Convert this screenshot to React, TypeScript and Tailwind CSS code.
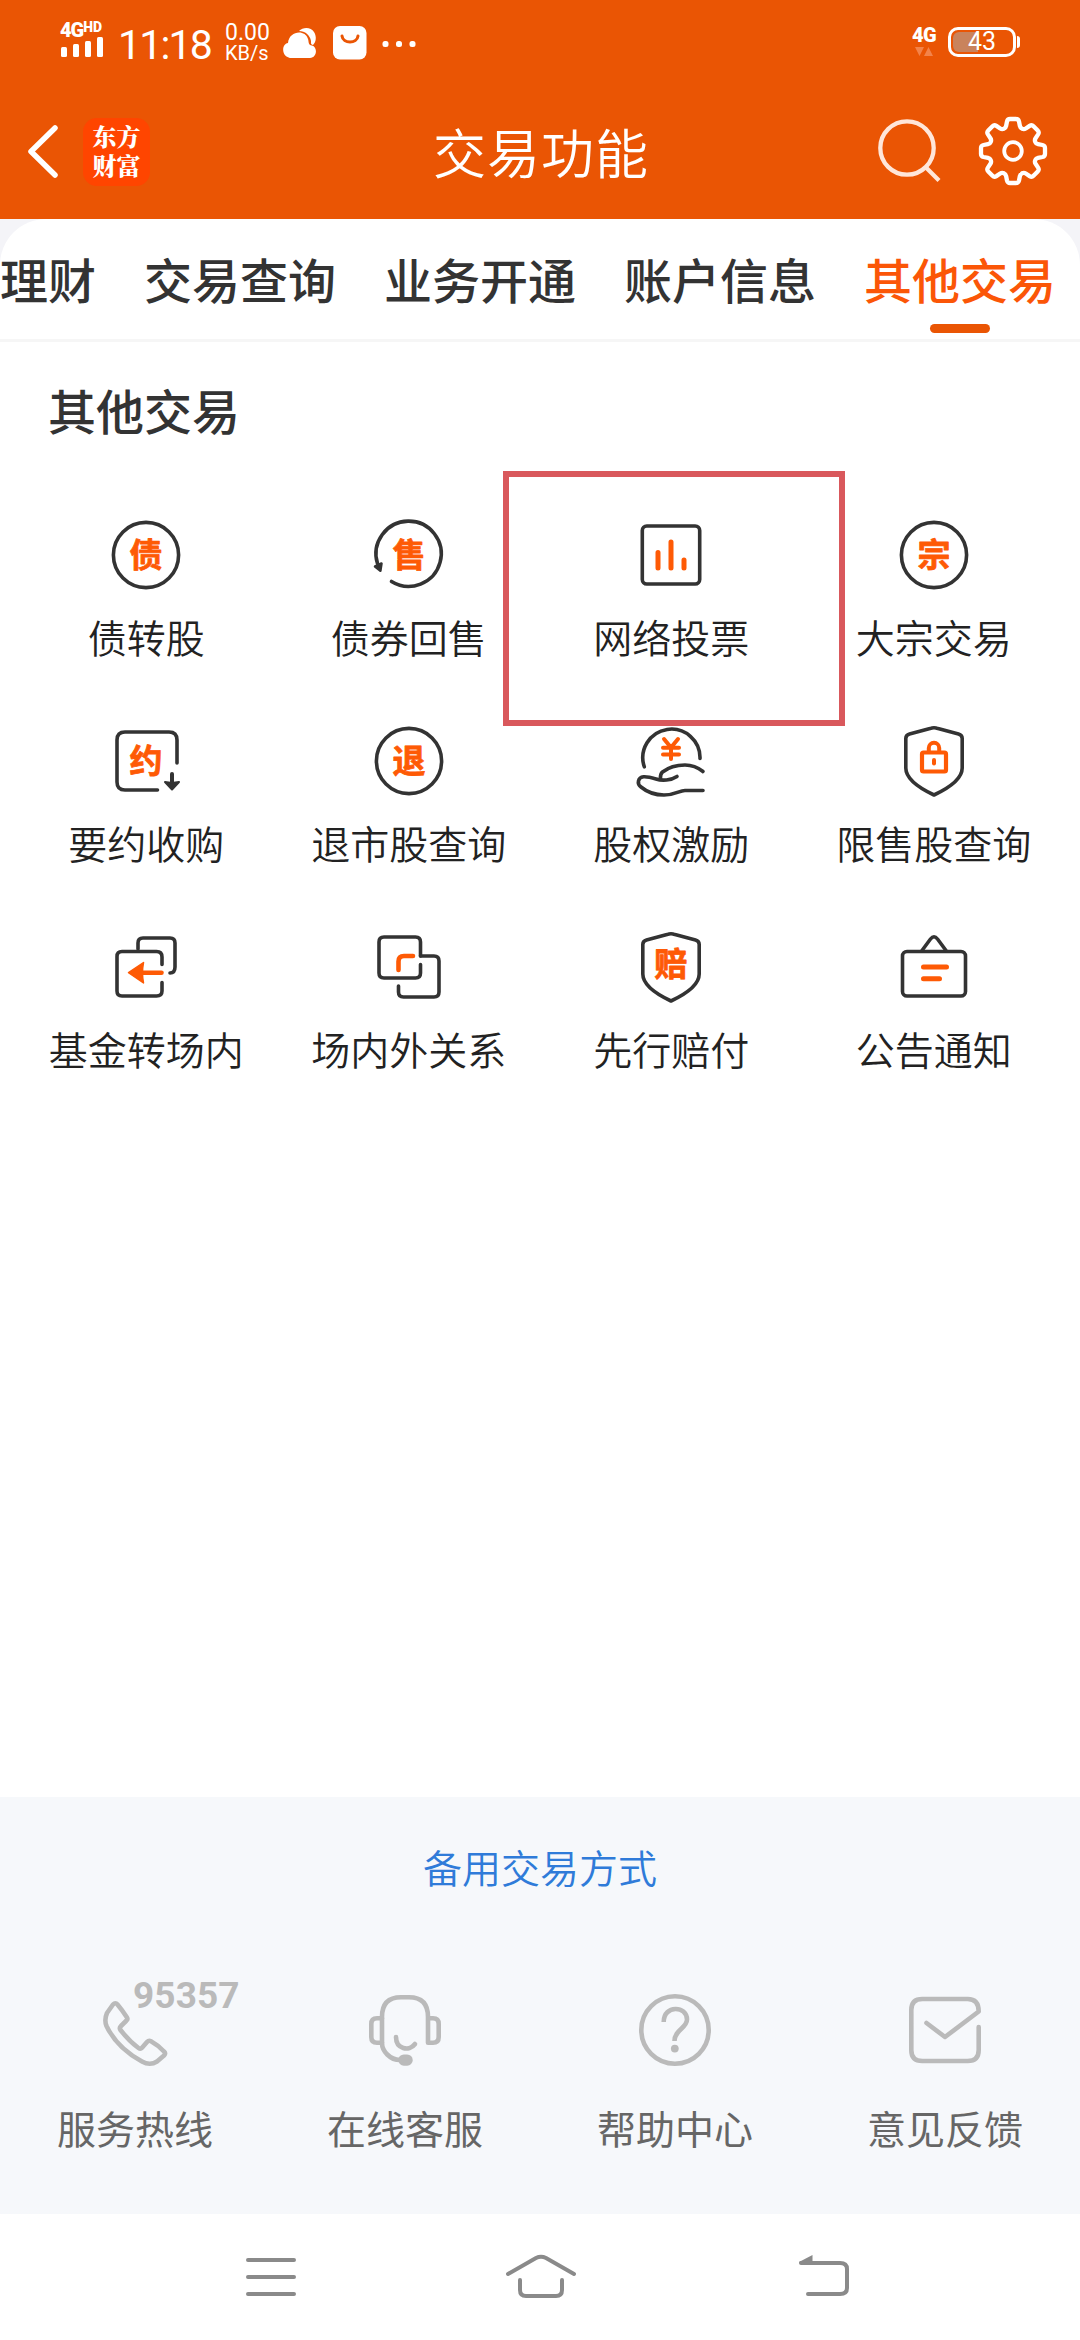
import type { ReactNode } from "react";

const DARK = "#333333";
const ORANGE = "#fe5a05";
const GRAY = "#bababa";

function Icon({ children, color = DARK, width = 3.6 }: { children: ReactNode; color?: string; width?: number }) {
  return (
    <svg
      viewBox="-40 -40 80 80"
      className="block h-20 w-20 overflow-visible"
      fill="none"
      stroke={color}
      strokeWidth={width}
      strokeLinecap="round"
      strokeLinejoin="round"
    >
      {children}
    </svg>
  );
}

function Glyph({ char, y = 12 }: { char: string; y?: number }) {
  return (
    <text
      x="0"
      y={y}
      textAnchor="middle"
      fill={ORANGE}
      stroke={ORANGE}
      strokeWidth="0.8"
      className="text-[33px] font-bold"
    >
      {char}
    </text>
  );
}

const shield = "M-4,-32.4 Q0,-34 4,-32.4 L24.5,-27 Q28.2,-26 28.2,-22.5 L28.2,7 C28.2,17 17,26 0,34 C-17,26 -28.2,17 -28.2,7 L-28.2,-22.5 Q-28.2,-26 -24.5,-27 Z";

type Item = { label: string; icon: ReactNode; marked?: boolean };

const items: Item[] = [
  {
    label: "债转股",
    icon: (
      <Icon>
        <circle r="32.6" />
        <Glyph char="债" />
      </Icon>
    ),
  },
  {
    label: "债券回售",
    icon: (
      <Icon>
        <path d="M-17.5,26.5 A32.6,32.6 0 1 0 -31.5,8.5" />
        <path d="M-34,11.5 L-27.5,8.5 L-28.6,15.8 Z" fill={DARK} strokeWidth="2.5" />
        <Glyph char="售" />
      </Icon>
    ),
  },
  {
    label: "网络投票",
    marked: true,
    icon: (
      <Icon>
        <rect x="-28.7" y="-29" width="57.4" height="58" rx="4.5" />
        <path d="M-13,-2.5 V13 M0,-13 V13 M13,5 V13" stroke={ORANGE} strokeWidth="5" />
      </Icon>
    ),
  },
  {
    label: "大宗交易",
    icon: (
      <Icon>
        <circle r="32.6" />
        <Glyph char="宗" />
      </Icon>
    ),
  },
  {
    label: "要约收购",
    icon: (
      <Icon>
        <path d="M31,2 V-21 Q31,-29 23,-29 H-21 Q-29,-29 -29,-21 V21 Q-29,29 -21,29 H11.5" />
        <path d="M26,13 V22" strokeWidth="4" />
        <path d="M19,21 L26,22 L33,21 L26,28.5 Z" fill={DARK} strokeWidth="2" />
        <Glyph char="约" />
      </Icon>
    ),
  },
  {
    label: "退市股查询",
    icon: (
      <Icon>
        <circle r="32.6" />
        <Glyph char="退" />
      </Icon>
    ),
  },
  {
    label: "股权激励",
    icon: (
      <Icon>
        <path d="M-26.7,5.8 A28.6,28.6 0 1 1 29,-2.5" />
        <path d="M-7,-22 L0,-13.5 L7,-22 M0,-13 V-2 M-8,-13.3 H8 M-8,-6.5 H8" stroke={ORANGE} strokeWidth="4" />
        <path d="M32,10.5 C27,6.5 22,4 14,4 C4,4 -4,7.5 -8.5,11 C-11,13 -10.5,15.5 -10.5,18" />
        <path d="M6,15.5 C0,19.5 -9,20 -15,18 C-20,16.5 -24,15.5 -27.5,15.8 C-33,16.5 -34.5,22.5 -30,26 C-24,31 -16,34 -7,34 C5,34 8,29.5 14,29.5 H32" />
      </Icon>
    ),
  },
  {
    label: "限售股查询",
    icon: (
      <Icon>
        <path d={shield} />
        <rect x="-12" y="-8.5" width="24" height="19" rx="1.5" stroke={ORANGE} strokeWidth="4.2" />
        <path d="M-5.2,-9 V-13 A5.2,5.2 0 0 1 5.2,-13 V-9" stroke={ORANGE} strokeWidth="4" />
        <path d="M0,-1 V2.5" stroke={ORANGE} strokeWidth="4" />
      </Icon>
    ),
  },
  {
    label: "基金转场内",
    icon: (
      <Icon>
        <path d="M-8,-18 V-24 Q-8,-29 -3,-29 H24 Q29,-29 29,-24 V0 Q29,6 24,6" />
        <path d="M16,-2.5 V-10 Q16,-15.5 10.5,-15.5 H-24 Q-29,-15.5 -29,-10.5 V24 Q-29,29 -24,29 H10.5 Q16,29 16,24 V15.5" />
        <path d="M-3,5.7 H15.5" stroke={ORANGE} strokeWidth="4.6" />
        <path d="M-17.5,5.7 L-2.5,-4.5 Q-4.5,5.7 -2.5,16 Z" fill={ORANGE} stroke={ORANGE} strokeWidth="1.5" />
      </Icon>
    ),
  },
  {
    label: "场内外关系",
    icon: (
      <Icon>
        <path d="M11.5,-11 V-25 Q11.5,-30 6.5,-30 H-25 Q-30,-30 -30,-25 V6 Q-30,11 -25,11 H6.5 Q11.5,11 11.5,6 V-2.5" />
        <path d="M11.5,-11 H25 Q30,-11 30,-6 V25 Q30,30 25,30 H-5.5 Q-10.5,30 -10.5,25 V19" />
        <path d="M4,-11 H-5 Q-10.5,-11 -10.5,-5.5 V3" stroke={ORANGE} strokeWidth="4.6" />
      </Icon>
    ),
  },
  {
    label: "先行赔付",
    icon: (
      <Icon>
        <path d={shield} />
        <Glyph char="赔" y={9} />
      </Icon>
    ),
  },
  {
    label: "公告通知",
    icon: (
      <Icon>
        <rect x="-31.5" y="-15.5" width="63" height="44.5" rx="4.5" />
        <path d="M-12,-16.5 L-3.5,-28 Q0,-32.5 3.5,-28 L12,-16.5" />
        <path d="M-10.5,0 H12.5 M-10.5,11.7 H5.5" stroke={ORANGE} strokeWidth="5" />
      </Icon>
    ),
  },
];

const services: Item[] = [
  {
    label: "服务热线",
    icon: (
      <div className="relative">
        <Icon color={GRAY} width={4.6}>
          <path d="M-22,-25.5 Q-19.6,-28 -17.5,-25.5 Q-12.5,-19.5 -8,-12.5 Q-7,-10.7 -8.5,-9.5 L-14,-4 Q-16,-2 -14.5,0 Q-6,11 3.5,18 Q5.5,19.5 7,17.8 L12,12 Q13.8,10 16,11.2 Q23,15 29,21.5 Q31,23.5 29,25.5 L22,31.5 Q15,36 7,31.5 Q-18,18 -28.5,-4 Q-31,-10 -28,-17 Z" />
        </Icon>
        <span className="absolute top-[-12px] left-[38px] font-['Roboto'] text-[37px] leading-[36px] font-bold tracking-[0.1px] text-[#bababa]">
          95357
        </span>
      </div>
    ),
  },
  {
    label: "在线客服",
    icon: (
      <Icon color={GRAY} width={4.6}>
        <path d="M-23,-11.7 H-28 Q-33.7,-11.7 -33.7,-6 V7 Q-33.7,12.7 -28,12.7 H-23" />
        <path d="M23,-11.7 H28 Q33.7,-11.7 33.7,-6 V7 Q33.7,12.7 28,12.7 H23 V-13 Q23,-32.7 4,-32.7 H-4 Q-23,-32.7 -23,-13 V13 C-23,21 -15,30 -5,30" />
        <rect x="-6.7" y="24.5" width="14.4" height="11.2" rx="5.5" fill={GRAY} stroke="none" />
        <path d="M-9,7 C-9,19 4,22 10,14" />
      </Icon>
    ),
  },
  {
    label: "帮助中心",
    icon: (
      <Icon color={GRAY} width={4.6}>
        <circle r="33.7" />
        <path d="M-11.3,-8 C-11.3,-25.5 12,-24.5 12,-10.5 C12,-2 -0.5,0 -0.5,11" strokeLinecap="butt" />
        <circle cx="-0.2" cy="18.6" r="3.9" fill={GRAY} stroke="none" />
      </Icon>
    ),
  },
  {
    label: "意见反馈",
    icon: (
      <Icon color={GRAY} width={4.6}>
        <path d="M33.7,-3 V20 Q33.7,31 22.7,31 H-22.7 Q-33.7,31 -33.7,20 V-20 Q-33.7,-31 -22.7,-31 H22.7 Q33.7,-31 33.7,-18.5 L0,7 L-18.5,-7" />
      </Icon>
    ),
  },
];

const tabs = ["交易查询", "业务开通", "账户信息"];

function StatusBar() {
  return (
    <div className="flex h-[84px] items-start justify-between pr-[60px] pl-[60px] text-white">
      <div className="flex items-start">
        <div className="w-[46px] pt-[21px]">
          <div className="flex h-4 items-start font-['Roboto'] font-black whitespace-nowrap">
            <span className="text-[20px] leading-[18px] tracking-[-1px]">4G</span>
            <span className="text-[14px] leading-[12px]">HD</span>
          </div>
          <svg viewBox="0 0 44 20" className="block h-5 w-11" fill="white">
            <rect x="1" y="10" width="6" height="10" rx="1.5" />
            <rect x="13" y="7" width="6" height="13" rx="1.5" />
            <rect x="25" y="4" width="6" height="16" rx="1.5" />
            <rect x="37" y="0" width="6" height="20" rx="1.5" />
          </svg>
        </div>
        <span className="ml-[12px] w-[106px] pt-[24px] font-['Roboto'] text-[41px] leading-[42px] tracking-[-1.8px] whitespace-nowrap">11:18</span>
        <div className="w-[59px] pt-[23px] pl-px font-['Roboto'] whitespace-nowrap">
          <div className="text-[23px] leading-[20px]">0.00</div>
          <div className="text-[20px] leading-[20px]">KB/s</div>
        </div>
        <svg viewBox="0 0 34 32" className="mt-[27px] block h-8 w-[34px]" fill="white">
          <path d="M16,4 C20,0 28,0 31,5 C34,10 33,15 30,18 C28,17.5 28,17 28,14 C27,8 22,4 16,4 Z" />
          <path d="M9,31 C-2,31 -2,17 5,16 C6,4 22,2 25,12 C26,15 25,18 29,18.5 C35,20 34,31 27,31 Z" />
        </svg>
        <svg viewBox="0 0 34 34" className="mt-[26px] ml-[16px] block h-[34px] w-[34px]">
          <rect width="33.5" height="33.5" rx="7" fill="white" />
          <path d="M9,10 C10,18 24,18 25,10" fill="none" stroke="#ea5504" strokeWidth="3" strokeLinecap="round" />
        </svg>
        <svg viewBox="0 0 34 8" className="mt-[40px] ml-[15px] block h-2 w-[34px]" fill="white">
          <rect x="0.5" y="1" width="6" height="6" rx="2.5" />
          <rect x="14" y="1" width="6" height="6" rx="2.5" />
          <rect x="27.5" y="1" width="6" height="6" rx="2.5" />
        </svg>
      </div>
      <div className="flex items-start">
        <div className="w-[36px] pt-[26px]">
          <div className="h-[21px] font-['Roboto'] text-[20px] leading-[18px] font-black tracking-[-0.5px]">4G</div>
          <svg viewBox="0 0 20 10" className="ml-[3px] block h-[10px] w-5" fill="#f3834a">
            <path d="M0,0 H9 L4.5,9 Z M9,9 H18 L13.5,0 Z" />
          </svg>
        </div>
        <div className="mt-[27px] flex items-center">
          <div className="relative flex h-[30px] w-[68px] items-center justify-center rounded-[10px] border-3 border-white">
            <div className="absolute top-[2px] left-[2px] h-5 w-[25px] rounded-l-[6px] bg-[#c9835c]" />
            <span className="relative font-['Roboto'] text-[25px] leading-6">43</span>
          </div>
          <div className="ml-px h-3 w-[3px] rounded-r bg-white" />
        </div>
      </div>
    </div>
  );
}

/* Outline of an eight-toothed cog: one rounded tooth repeated in 45° steps. */
function cogPath() {
  const tooth: [string, [number, number][]][] = [
    ["L", [[-9.2, -22.2]]],
    ["Q", [[-7.3, -23], [-6.9, -25]]],
    ["L", [[-6, -29.5]]],
    ["Q", [[-5.4, -32], [-3, -32]]],
    ["L", [[3, -32]]],
    ["Q", [[5.4, -32], [6, -29.5]]],
    ["L", [[6.9, -25]]],
    ["Q", [[7.3, -23], [9.2, -22.2]]],
  ];
  let d = "";
  for (let i = 0; i < 8; i++) {
    const c = Math.cos((i * Math.PI) / 4);
    const s = Math.sin((i * Math.PI) / 4);
    for (const [cmd, pts] of tooth) {
      const coords = pts.map(([x, y]) => (x * c - y * s).toFixed(2) + "," + (x * s + y * c).toFixed(2)).join(" ");
      d += (d === "" ? "M" : cmd) + coords + " ";
    }
  }
  return d + "Z";
}

function Header() {
  return (
    <div className="flex h-[135px] items-start">
      <svg viewBox="0 0 34 56" className="mt-[40px] ml-[26px] block h-14 w-[34px]" fill="none" stroke="white" strokeWidth="5.5" strokeLinecap="round" strokeLinejoin="round">
        <path d="M29,4 L5,27.500 L29,51" />
      </svg>
      <div className="mt-[34px] ml-[23px] flex h-[68px] w-[67px] flex-col items-center rounded-[14px] bg-[#ff4500] pt-[3px] font-['Noto_Serif_CJK_SC','Noto_Sans_CJK_SC',sans-serif] text-[24px] leading-[29px] font-black text-white">
        <span className="block h-[29px]">东方</span>
        <span className="block h-[29px]">财富</span>
      </div>
      <h1 className="mt-[32px] ml-[283px] w-[216px] text-[53px] leading-[70px] font-[350] tracking-[1px] whitespace-nowrap text-white">交易功能</h1>
      <svg viewBox="0 0 66 66" className="mt-[33px] ml-[227px] block h-[66px] w-[66px]" fill="none" stroke="#ffe6d9" strokeWidth="4.3">
        <circle cx="31" cy="31" r="26.7" />
        <path d="M49.5,50 L63,63.5" />
      </svg>
      <svg viewBox="-36 -36 72 72" className="mt-[31px] ml-[35px] block h-[72px] w-[72px]" fill="none" stroke="white" strokeWidth="4.3" strokeLinejoin="round">
        <path d={cogPath()} />
        <circle r="8.8" strokeWidth="3.8" />
      </svg>
    </div>
  );
}

export default function App() {
  return (
    <div lang="zh-CN" className="flex h-[2340px] w-[1080px] flex-col overflow-hidden bg-white font-['Noto_Sans_CJK_SC',sans-serif]">
      <header className="h-[219px] bg-[#ea5504]">
        <StatusBar />
        <Header />
      </header>

      <nav className="h-[123px] border-b-3 border-[#f6f6f6] bg-[#f4f4f8]">
        <div className="flex h-[120px] gap-12 overflow-hidden rounded-t-[46px] bg-white pt-[29px] text-[48px] leading-[60px] font-medium whitespace-nowrap text-[#333333]">
          <span>理财</span>
          {tabs.map((t) => (
            <span key={t}>{t}</span>
          ))}
          <span className="flex flex-col items-center text-[#fb5607]">
            其他交易
            <span className="mt-[16px] h-[9px] w-[60px] rounded-full bg-[#ea5504]" />
          </span>
        </div>
      </nav>

      <main className="flex-1">
        <h2 className="mt-[37px] ml-12 h-[60px] text-[48px] leading-[60px] font-medium text-[#333333]">其他交易</h2>
        <div className="mt-[76px] grid grid-cols-4 px-[15px]">
          {items.map((it) => (
            <div key={it.label} className="relative flex h-[206px] flex-col items-center">
              {it.icon}
              <span className="mt-4 text-[39px] leading-[50px] font-[350] whitespace-nowrap text-[#222222]">{it.label}</span>
              {it.marked && <div className="absolute top-[-44px] left-[-37px] h-[255px] w-[342px] border-6 border-[#d9585c]" />}
            </div>
          ))}
        </div>
      </main>

      <footer className="h-[417px] bg-[#f6f8fb] pt-[44px]">
        <a className="block text-center text-[39px] leading-[50px] font-[350] text-[#2f7bd9]">备用交易方式</a>
        <div className="mt-[99px] grid grid-cols-4">
          {services.map((s) => (
            <div key={s.label} className="flex flex-col items-center">
              {s.icon}
              <span className="mt-8 text-[39px] leading-[50px] whitespace-nowrap text-[#666666]">{s.label}</span>
            </div>
          ))}
        </div>
      </footer>

      <div className="flex h-[126px] items-start bg-white pt-[40px] pl-[245px]">
        <svg viewBox="0 0 52 46" className="block h-[46px] w-[52px]" fill="none" stroke="#8a8a8a" strokeWidth="4" strokeLinecap="round">
          <path d="M3,6 H49 M3,23 H49 M3,40 H49" />
        </svg>
        <svg viewBox="0 0 72 46" className="ml-[208px] block h-[46px] w-[72px]" fill="none" stroke="#8a8a8a" strokeWidth="4" strokeLinecap="round" strokeLinejoin="round">
          <path d="M3,20 L31,4 Q36,1.5 41,4 L69,20" />
          <path d="M15,26 V36 Q15,42 21,42 H51 Q57,42 57,36 V26" />
        </svg>
        <svg viewBox="0 0 54 46" className="ml-[220px] block h-[46px] w-[54px]" fill="none" stroke="#8a8a8a" strokeWidth="4" strokeLinecap="round">
          <path d="M4,9 H43 Q50,9 50,15 V34 Q50,40 43,40 H11" />
          <path d="M2,8 L15.5,1 V10 H3 Z" fill="#8a8a8a" stroke="none" />
        </svg>
      </div>
    </div>
  );
}
